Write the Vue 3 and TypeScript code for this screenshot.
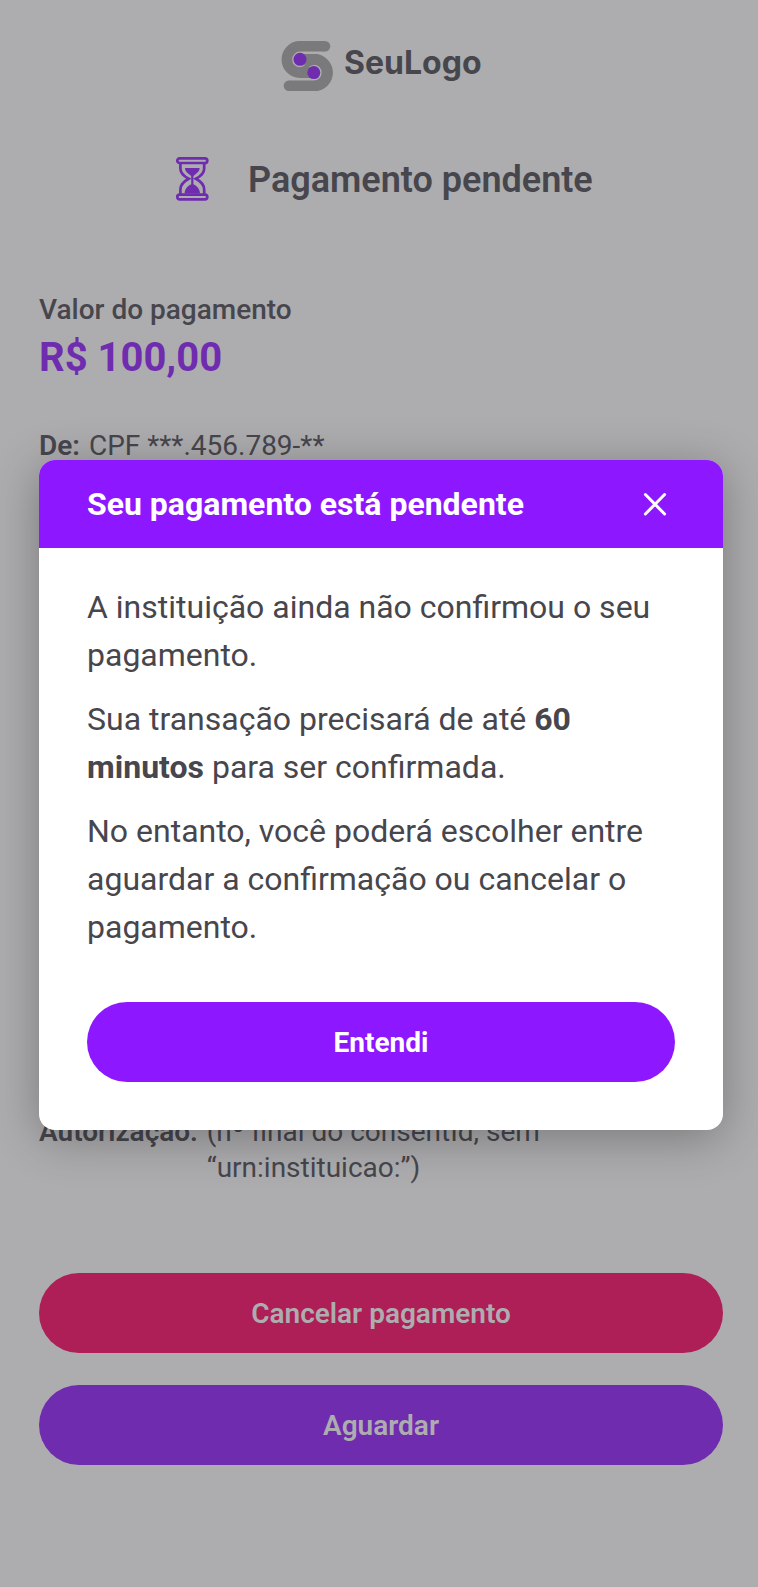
<script setup lang="ts">
import { ref } from 'vue'

interface Detail {
  label: string
  value: string
}

const modalOpen = ref(true)
const payer: Detail = { label: 'De:', value: 'CPF ***.456.789-**' }
const authorization: Detail = {
  label: 'Autorização:',
  value: '(nº final do consentId, sem “urn:instituicao:”)',
}

function closeModal(): void {
  modalOpen.value = false
}
</script>

<template>
  <div class="screen">
    <main class="page">
      <header class="brand">
        <svg class="brand-mark" viewBox="0 0 58 56" aria-hidden="true">
          <g fill="none" stroke="#7a7a7c" stroke-width="10.6">
            <path d="M47 8.3H22a13.15 13.15 0 0 0 0 26.3h13.8" />
            <path d="M11 47.8h24.8a13.2 13.2 0 0 0 0-26.4H22" />
          </g>
          <g fill="#7a7a7c">
            <circle cx="47" cy="8.3" r="5.3" />
            <circle cx="11" cy="47.8" r="5.3" />
            <path d="M28.300 25h7.500v1.900a7.800 7.800 0 0 0-6.400 4.500H22v-2.200a7.800 7.800 0 0 0 6.300-4.200z" />
            <path d="M35.800 16.100a18.500 18.500 0 0 1 0 37v-5a13.500 13.500 0 0 0 0-27z" transform="translate(.6 0)" />
          </g>
          <circle cx="22" cy="21.3" r="6.5" fill="#702caf" />
          <circle cx="35.8" cy="34.6" r="6.5" fill="#702caf" />
        </svg>
        <span class="brand-name">SeuLogo</span>
      </header>

      <div class="status">
        <svg class="hourglass" viewBox="0 0 44 54" aria-hidden="true">
          <g fill="none" stroke="#702caf" stroke-width="2.7">
            <rect x="7.300" y="6.300" width="30" height="4.700" rx="2.350" />
            <rect x="7.300" y="42.700" width="30" height="4.700" rx="2.350" />
            <path d="M10.400 11v5.500c0 5 4 8 8.300 10.300-4.300 2.300-8.300 5.700-8.300 10.700v5" />
            <path d="M34.200 11v5.500c0 5-4 8-8.300 10.300 4.300 2.300 8.300 5.700 8.300 10.700v5" />
            <path d="M22.300 22v12" stroke-width="2.200" />
          </g>
          <path d="M15 16h14.600c0 4-3.800 6-7.300 8.800C18.800 22 15 20 15 16zM14.600 41.500c0-4.500 3.500-8.900 7.700-9.600 4.200.7 7.700 5.100 7.700 9.600z" fill="#702caf" />
        </svg>
        <h1>Pagamento pendente</h1>
      </div>

      <section class="amount">
        <p class="amount-label">Valor do pagamento</p>
        <p class="amount-value">R$ 100,00</p>
      </section>

      <dl class="details">
        <div class="detail">
          <dt>{{ payer.label }}</dt>
          <dd>{{ payer.value }}</dd>
        </div>
        <div class="detail detail-auth">
          <dt>{{ authorization.label }}</dt>
          <dd>{{ authorization.value }}</dd>
        </div>
      </dl>

      <div class="actions">
        <button class="button danger" type="button">Cancelar pagamento</button>
        <button class="button muted" type="button">Aguardar</button>
      </div>
    </main>

    <div v-if="modalOpen" class="overlay">
      <section class="modal" role="dialog" aria-modal="true">
        <header class="modal-header">
          <h2>Seu pagamento está pendente</h2>
          <button class="close" type="button" aria-label="Fechar" @click="closeModal">
            <svg viewBox="0 0 24 24" aria-hidden="true">
              <path d="M2.400 2.500l19.200 19.500M21.600 2.500L2.400 22" />
            </svg>
          </button>
        </header>
        <div class="modal-body">
          <p>A instituição ainda não confirmou o seu pagamento.</p>
          <p>Sua transação precisará de até <strong>60 minutos</strong> para ser confirmada.</p>
          <p>No entanto, você poderá escolher entre aguardar a confirmação ou cancelar o pagamento.</p>
          <button class="button primary" type="button" @click="closeModal">Entendi</button>
        </div>
      </section>
    </div>
  </div>
</template>

<style>
body {
  margin: 0;
  background: #adadaf;
}
</style>

<style scoped>
.screen {
  position: relative;
  height: 1587px;
  overflow: hidden;
  background: #adadaf;
  color: #47464d;
  font-family: Roboto, sans-serif;
}

h1,
h2,
p,
dl,
dd {
  margin: 0;
}

.page {
  box-sizing: border-box;
  height: 100%;
  padding: 38px 35px 122px 39px;
  display: flex;
  flex-direction: column;
}

.brand {
  display: flex;
  align-items: center;
  height: 56px;
  padding-left: 239px;
}

.brand-mark {
  width: 58px;
  height: 56px;
}

.brand-name {
  margin: -7px 0 0 8px;
  font: 700 32px/40px Inter, sans-serif;
}

.status {
  display: flex;
  height: 54px;
  margin-top: 58px;
  padding-left: 131px;
}

.hourglass {
  width: 44px;
  height: 54px;
}

h1 {
  margin-left: 34px;
  font-size: 36px;
  font-weight: 600;
  line-height: 56px;
}

.amount {
  margin-top: 83px;
}

.amount-label {
  font-size: 28px;
  font-weight: 500;
  line-height: 42px;
}

.amount-value {
  font-size: 40px;
  font-weight: 700;
  line-height: 54px;
  color: #702caf;
}

.details {
  margin-top: 43px;
  font-size: 28px;
  line-height: 36px;
}

.detail {
  display: flex;
  gap: 9px;
}

dt {
  font-weight: 600;
  white-space: nowrap;
}

.detail-auth {
  margin-top: 650px;
}

.detail-auth dd {
  width: 400px;
}

.actions {
  display: flex;
  flex-direction: column;
  gap: 32px;
  margin-top: auto;
}

.button {
  box-sizing: border-box;
  width: 100%;
  height: 80px;
  flex: none;
  padding: 2px 0 0;
  border: 0;
  border-radius: 40px;
  font: 600 28px/78px Roboto, sans-serif;
}

.danger {
  background: #ad1f56;
  color: #adadaf;
}

.muted {
  background: #702caf;
  color: #adadaf;
}

.primary {
  display: block;
  margin-top: 51px;
  background: #8d18ff;
  color: #fff;
  font-weight: 700;
}

.overlay {
  position: absolute;
  inset: 0;
  box-sizing: border-box;
  padding: 460px 35px 0 39px;
}

.modal {
  height: 670px;
  overflow: hidden;
  border-radius: 16px;
  background: #fff;
  box-shadow: 0 8px 48px rgba(0, 0, 0, 0.3);
}

.modal-header {
  display: flex;
  align-items: center;
  justify-content: space-between;
  height: 88px;
  box-sizing: border-box;
  padding: 0 56px 0 48px;
  background: #8d18ff;
  color: #fff;
}

h2 {
  font-size: 32px;
  font-weight: 700;
  line-height: 48px;
}

.close {
  width: 24px;
  height: 24px;
  padding: 0;
  border: 0;
  background: none;
  color: inherit;
}

.close svg {
  display: block;
  width: 24px;
  height: 24px;
  fill: none;
  stroke: currentColor;
  stroke-width: 3;
  stroke-linecap: round;
}

.modal-body {
  padding: 35px 48px 48px;
}

.modal-body p {
  font-size: 32px;
  line-height: 48px;
}

.modal-body p + p {
  margin-top: 16px;
}

strong {
  font-weight: 700;
}
</style>
